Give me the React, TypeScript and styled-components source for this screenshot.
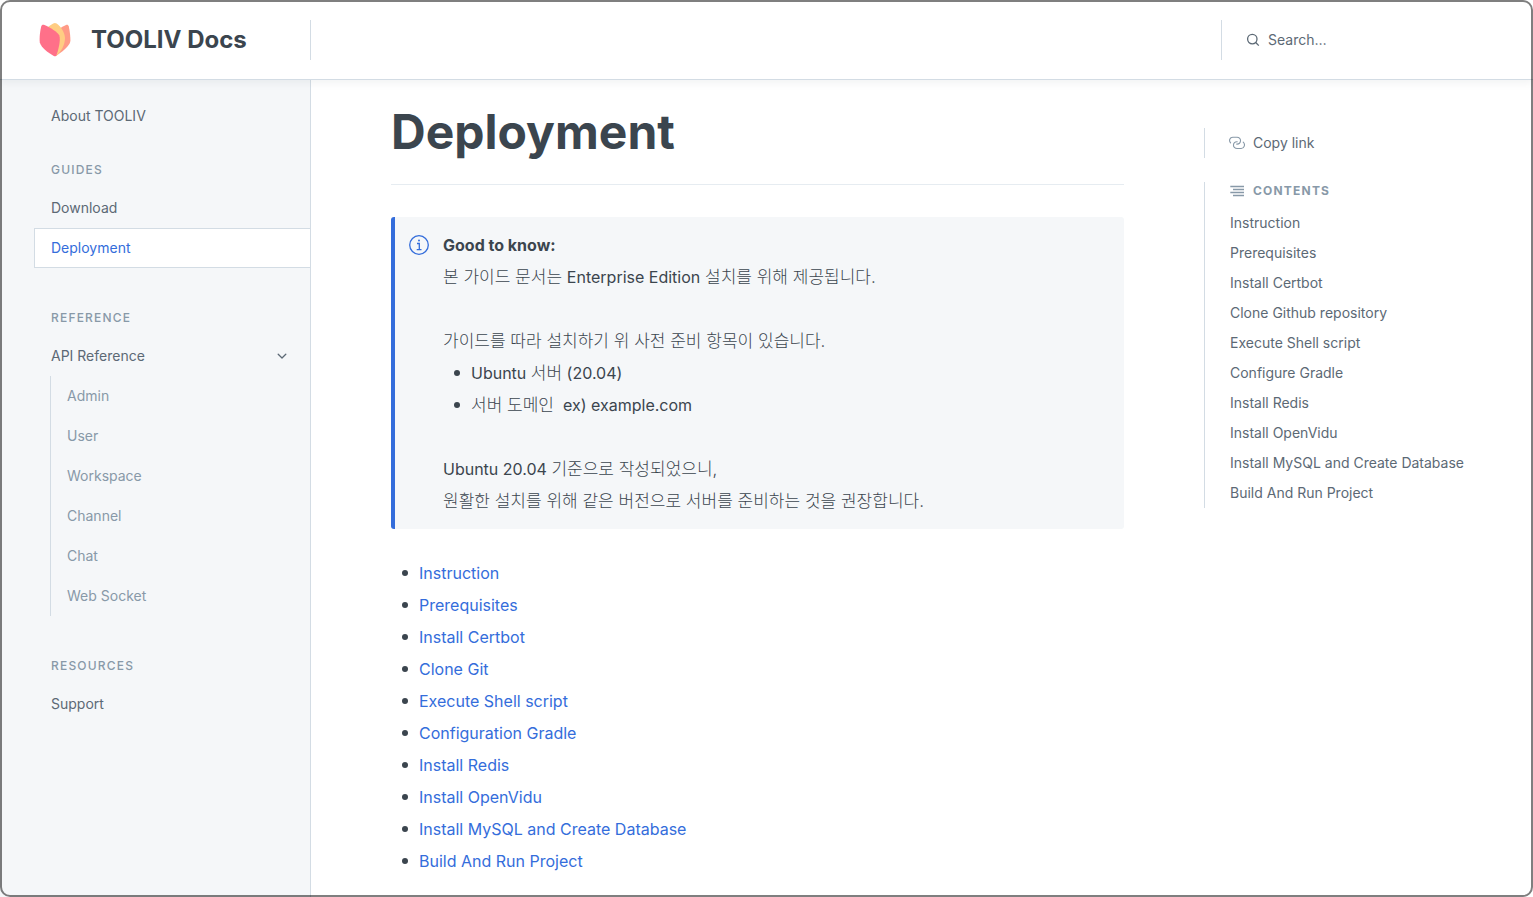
import React from "react";
import styled, { createGlobalStyle, css } from "styled-components";

const color = {
  text: "#3b454e",
  secondary: "#5c6975",
  muted: "#8899a8",
  line: "#d3dce4",
  softLine: "#e6ecf1",
  surface: "#f5f7f9",
  blue: "#346ddb",
};

const GlobalStyle = createGlobalStyle`
  *, *::before, *::after { box-sizing: border-box; }
  body {
    margin: 0;
    background: #ffffff;
    color: ${color.text};
    font-family: Inter, "Noto Sans CJK KR", sans-serif;
    font-size: 16px;
    line-height: 32px;
  }
  h1, h2, p, ul { margin: 0; padding: 0; }
  ul { list-style: none; }
  a { color: inherit; text-decoration: none; }
`;

const Page = styled.div`
  display: flex;
  flex-direction: column;
  min-height: 100vh;
`;

const WindowFrame = styled.div`
  position: fixed;
  inset: 0;
  z-index: 10;
  border: 2px solid rgba(0, 0, 0, 0.5);
  border-radius: 10px;
  pointer-events: none;
`;

const Header = styled.header`
  position: relative;
  z-index: 1;
  display: flex;
  align-items: center;
  justify-content: space-between;
  height: 80px;
  border-bottom: 1px solid ${color.line};
  background: #ffffff;
  box-shadow: 0 3px 8px 0 rgba(116, 129, 141, 0.1);
`;

const Brand = styled.a`
  display: flex;
  align-items: center;
  gap: 20px;
  width: 311px;
  height: 40px;
  padding-left: 39px;
  border-right: 1px solid ${color.line};
  font-size: 24px;
  font-weight: 700;
`;

const SearchBox = styled.label`
  display: flex;
  align-items: center;
  gap: 8px;
  width: 312px;
  height: 40px;
  padding-left: 24px;
  border-left: 1px solid ${color.line};
  color: ${color.secondary};
`;

const SearchInput = styled.input`
  width: 200px;
  padding: 0;
  border: 0;
  outline: 0;
  background: transparent;
  color: ${color.secondary};
  font-family: inherit;
  font-size: 14px;

  &::placeholder {
    color: ${color.secondary};
    opacity: 1;
  }
`;

const Body = styled.div`
  display: flex;
  flex: 1;
`;

const Sidebar = styled.nav`
  flex: none;
  width: 311px;
  padding: 16px 0 32px 34px;
  border-right: 1px solid ${color.line};
  background: ${color.surface};
  color: ${color.secondary};
  font-size: 14px;
`;

const NavGroup = styled.section<{ $tight?: boolean }>`
  margin-bottom: ${(p) => (p.$tight ? 16 : 32)}px;
`;

const NavHeading = styled.h2`
  padding-left: 17px;
  color: ${color.muted};
  font-size: 12px;
  font-weight: 500;
  line-height: 36px;
  letter-spacing: 0.1em;
  text-transform: uppercase;
`;

const navRow = css`
  display: flex;
  align-items: center;
  justify-content: space-between;
  width: 100%;
  height: 40px;
  padding: 0 21px 0 16px;
  border: 1px solid transparent;
  border-right: 0;
  background: transparent;
  color: inherit;
  font: inherit;
`;

const NavLink = styled.a<{ $active?: boolean }>`
  ${navRow}
  ${(p) =>
    p.$active &&
    css`
      border-color: ${color.line};
      background: #ffffff;
      color: ${color.blue};
    `}
`;

const NavToggle = styled.button`
  ${navRow}
  cursor: pointer;
`;

const SubNav = styled.ul`
  margin-left: 16px;
  border-left: 1px solid ${color.line};
  color: ${color.muted};
`;

const SubLink = styled.a`
  display: block;
  padding-left: 16px;
  line-height: 40px;
`;

const Main = styled.main`
  flex: 1;
  min-width: 0;
  padding: 20px 80px 20px;
`;

const Title = styled.h1`
  padding-bottom: 20px;
  margin-bottom: 32px;
  border-bottom: 1px solid ${color.softLine};
  font-size: 48px;
  font-weight: 700;
  line-height: 64px;
`;

const Callout = styled.aside`
  display: flex;
  gap: 14px;
  padding: 12px 16px 12px 14px;
  margin-bottom: 28px;
  border-left: 4px solid ${color.blue};
  border-radius: 3px;
  background: ${color.surface};

  > svg {
    flex: none;
    margin-top: 6px;
  }
`;

const Paragraph = styled.p<{ $spaced?: boolean }>`
  margin-top: ${(p) => (p.$spaced ? 32 : 0)}px;
`;

const Strong = styled.strong`
  font-weight: 700;
`;

const Ko = styled.span`
  font-size: 17px;
  font-weight: 300;
  line-height: 1;
`;

const BulletItem = styled.li`
  display: flex;
  align-items: center;
  gap: 11px;
  padding-left: 11px;
  white-space: pre-wrap;

  &::before {
    content: "";
    flex: none;
    width: 6px;
    height: 6px;
    border-radius: 50%;
    background: ${color.text};
  }
`;

const TextLink = styled.a`
  color: ${color.blue};
`;

const Aside = styled.aside`
  flex: none;
  width: 329px;
  padding-top: 48px;
  color: ${color.secondary};
  font-size: 14px;
`;

const AsideBlock = styled.div`
  padding-left: 24px;
  margin-bottom: 24px;
  border-left: 1px solid ${color.line};
`;

const CopyButton = styled.button`
  display: flex;
  align-items: center;
  gap: 8px;
  height: 30px;
  padding: 0;
  border: 0;
  background: transparent;
  color: ${color.secondary};
  font: inherit;
  cursor: pointer;

  svg {
    color: ${color.muted};
  }
`;

const ContentsHeading = styled.h2`
  display: flex;
  align-items: center;
  gap: 8px;
  height: 26px;
  padding-bottom: 8px;
  color: ${color.muted};
  font-size: 12px;
  font-weight: 700;
  letter-spacing: 0.1em;
  text-transform: uppercase;
`;

const ContentsLink = styled.a`
  display: block;
  padding-left: 1px;
  line-height: 30px;
`;

const Logo = () => (
  <svg width="32" height="35" viewBox="0 0 32 35" aria-hidden="true">
    <path d="M27 2.900C28.400 2.400 29.300 2.900 29.700 4.300C30.800 9 31.400 14 31.400 18.500C31.200 22.300 28 26.500 17 34L16 34L15 12C18 8 22 5 27 2.900Z" fill="#ff9b87" />
    <path d="M14.200 1.400C15.300.7 16.500.7 17.600 1.400C22 4.500 26 10.500 26 16C26 23 22 30 17 34L9 20L8 5.800C10 4 12 2.700 14.200 1.400Z" fill="#ffcd83" />
    <path d="M2.200 4.500C2.700 2.700 3.900 2.300 5.500 3C11.500 5.700 18.500 10 20.200 13.300C21.300 16 20.800 20 20 24C19.200 27.800 18.400 31 17.300 33.400C16.700 34.400 15.800 34.400 14.800 33.900C8.500 30.500 2.200 25.500.8 20.500C.2 16 1.200 8.500 2.200 4.500Z" fill="#ff7089" />
  </svg>
);

const SearchIcon = () => (
  <svg width="14" height="14" viewBox="0 0 14 14" fill="none" stroke="currentColor" strokeWidth="1.3" aria-hidden="true">
    <circle cx="6.300" cy="6.100" r="4.700" />
    <path d="M9.700 9.500L12.800 12.600" />
  </svg>
);

const ChevronIcon = () => (
  <svg width="14" height="14" viewBox="0 0 14 14" fill="none" stroke="currentColor" strokeWidth="1.3" strokeLinecap="round" strokeLinejoin="round" aria-hidden="true">
    <path d="M3.200 5.300L7 9L10.800 5.300" />
  </svg>
);

const InfoIcon = () => (
  <svg width="20" height="20" viewBox="0 0 20 20" fill="none" stroke={color.blue} strokeWidth="1.3" aria-hidden="true">
    <circle cx="10" cy="10" r="9.3" />
    <path d="M8 8.500H10.300V14.500M7.700 14.600H12.500" />
    <circle cx="10" cy="5.600" r="1" fill={color.blue} stroke="none" />
  </svg>
);

const LinkIcon = () => (
  <svg width="16" height="14" viewBox="0 0 16 14" fill="none" stroke="currentColor" strokeWidth="1.1" strokeLinecap="round" aria-hidden="true">
    <path d="M1.600 6.800C-.4 4.600.7 1.300 3.800 1.300H8C10.300 1.400 11.700 3 11.500 4.900C11.300 6.900 9.600 8.200 7.700 8.100" />
    <path d="M14.200 6.100C16.600 8.300 15.300 12.400 12.200 12.500H8.200C5.800 12.400 4.300 10.800 4.500 8.800C4.700 6.800 6.300 5.600 8.200 5.700" />
  </svg>
);

const ContentsIcon = () => (
  <svg width="16" height="14" viewBox="0 0 16 14" fill="none" stroke="currentColor" strokeWidth="1.3" aria-hidden="true">
    <path d="M1.300 2.500H15M4 5.500H15M1.300 8.500H15M4 11.500H15" />
  </svg>
);

const apiPages = ["Admin", "User", "Workspace", "Channel", "Chat", "Web Socket"];

const steps = [
  "Instruction",
  "Prerequisites",
  "Install Certbot",
  "Clone Git",
  "Execute Shell script",
  "Configuration Gradle",
  "Install Redis",
  "Install OpenVidu",
  "Install MySQL and Create Database",
  "Build And Run Project",
];

const contents = [
  "Instruction",
  "Prerequisites",
  "Install Certbot",
  "Clone Github repository",
  "Execute Shell script",
  "Configure Gradle",
  "Install Redis",
  "Install OpenVidu",
  "Install MySQL and Create Database",
  "Build And Run Project",
];

export default function App() {
  return (
    <Page>
      <GlobalStyle />
      <Header>
        <Brand href="#">
          <Logo />
          TOOLIV Docs
        </Brand>
        <SearchBox>
          <SearchIcon />
          <SearchInput type="text" placeholder="Search…" aria-label="Search" />
        </SearchBox>
      </Header>
      <Body>
        <Sidebar>
          <NavGroup $tight>
            <NavLink href="#">About TOOLIV</NavLink>
          </NavGroup>
          <NavGroup>
            <NavHeading>Guides</NavHeading>
            <NavLink href="#">Download</NavLink>
            <NavLink href="#" $active aria-current="page">Deployment</NavLink>
          </NavGroup>
          <NavGroup>
            <NavHeading>Reference</NavHeading>
            <NavToggle type="button" aria-expanded="true">
              API Reference
              <ChevronIcon />
            </NavToggle>
            <SubNav>
              {apiPages.map((name) => (
                <li key={name}>
                  <SubLink href="#">{name}</SubLink>
                </li>
              ))}
            </SubNav>
          </NavGroup>
          <NavGroup>
            <NavHeading>Resources</NavHeading>
            <NavLink href="#">Support</NavLink>
          </NavGroup>
        </Sidebar>
        <Main>
          <Title>Deployment</Title>
          <Callout>
            <InfoIcon />
            <div>
              <Paragraph><Strong>Good to know:</Strong></Paragraph>
              <Paragraph>
                <Ko>본 가이드 문서는 </Ko>Enterprise Edition<Ko> 설치를 위해 제공됩니다.</Ko>
              </Paragraph>
              <Paragraph $spaced>
                <Ko>가이드를 따라 설치하기 위 사전 준비 항목이 있습니다.</Ko>
              </Paragraph>
              <ul>
                <BulletItem><span>Ubuntu <Ko>서버</Ko> (20.04)</span></BulletItem>
                <BulletItem><span><Ko>서버 도메인</Ko>{"  "}ex) example.com</span></BulletItem>
              </ul>
              <Paragraph $spaced>
                Ubuntu 20.04 <Ko>기준으로 작성되었으니,</Ko>
              </Paragraph>
              <Paragraph>
                <Ko>원활한 설치를 위해 같은 버전으로 서버를 준비하는 것을 권장합니다.</Ko>
              </Paragraph>
            </div>
          </Callout>
          <ul>
            {steps.map((name) => (
              <BulletItem key={name}>
                <TextLink href="#">{name}</TextLink>
              </BulletItem>
            ))}
          </ul>
        </Main>
        <Aside>
          <AsideBlock>
            <CopyButton type="button">
              <LinkIcon />
              Copy link
            </CopyButton>
          </AsideBlock>
          <AsideBlock>
            <ContentsHeading>
              <ContentsIcon />
              Contents
            </ContentsHeading>
            <ul>
              {contents.map((name) => (
                <li key={name}>
                  <ContentsLink href="#">{name}</ContentsLink>
                </li>
              ))}
            </ul>
          </AsideBlock>
        </Aside>
      </Body>
      <WindowFrame />
    </Page>
  );
}
